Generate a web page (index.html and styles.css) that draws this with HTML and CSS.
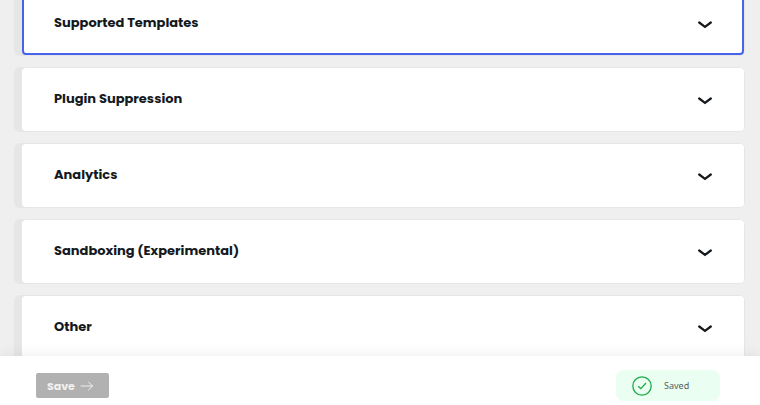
FILE: index.html
```
<!DOCTYPE html>
<html lang="en">

<head>
  <meta charset="UTF-8">
  <meta name="viewport" content="width=device-width, initial-scale=1.0">
  <title>Settings</title>
  <link rel="stylesheet" href="styles.css">
</head>

<body>
  <!-- Chevron shared by every drawer -->
  <svg class="sprite" width="0" height="0" aria-hidden="true">
    <symbol id="chevron" viewBox="0 0 14 8">
      <path d="M1.2 1.5 L7 5.9 L12.8 1.5" fill="none" stroke="currentColor" stroke-width="2.2" stroke-linecap="round" />
    </symbol>
  </svg>

  <main class="drawers">
    <section class="drawer drawer--focused">
      <h2><button type="button" class="drawer-toggle" aria-expanded="false">
        <span>Supported Templates</span>
        <svg class="chevron" aria-hidden="true"><use href="#chevron" /></svg>
      </button></h2>
    </section>
    <section class="drawer">
      <h2><button type="button" class="drawer-toggle" aria-expanded="false">
        <span>Plugin Suppression</span>
        <svg class="chevron" aria-hidden="true"><use href="#chevron" /></svg>
      </button></h2>
    </section>
    <section class="drawer">
      <h2><button type="button" class="drawer-toggle" aria-expanded="false">
        <span>Analytics</span>
        <svg class="chevron" aria-hidden="true"><use href="#chevron" /></svg>
      </button></h2>
    </section>
    <section class="drawer">
      <h2><button type="button" class="drawer-toggle" aria-expanded="false">
        <span>Sandboxing (Experimental)</span>
        <svg class="chevron" aria-hidden="true"><use href="#chevron" /></svg>
      </button></h2>
    </section>
    <section class="drawer">
      <h2><button type="button" class="drawer-toggle" aria-expanded="false">
        <span>Other</span>
        <svg class="chevron" aria-hidden="true"><use href="#chevron" /></svg>
      </button></h2>
    </section>
  </main>

  <footer class="save-bar">
    <button type="submit" class="save-button" disabled>
      Save
      <svg width="14" height="10" viewBox="0 0 14 10" fill="none" stroke="currentColor" aria-hidden="true">
        <path d="M1 5 H12.5 M8.5 1 L12.5 5 L8.5 9" stroke-linecap="round" stroke-linejoin="round" />
      </svg>
    </button>
    <p class="notice" role="status">
      <svg width="20" height="20" viewBox="0 0 20 20" fill="none" stroke="currentColor" aria-hidden="true">
        <circle cx="10" cy="10" r="9.2" stroke-width="1.3" />
        <path d="M6.2 10.2 L8.8 12.6 L14 7" stroke-width="1.3" />
      </svg>
      Saved
    </p>
  </footer>
</body>

</html>
```
FILE: styles.css
```
* {
  margin: 0;
  padding: 0;
  box-sizing: border-box;
}

body {
  background: #efefef;
  color: #14191e;
  font-family: Poppins, Inter, sans-serif;
}

.sprite {
  position: absolute;
}

/* Drawers */
.drawers {
  display: flex;
  flex-direction: column;
  gap: 11px;
  margin-top: -9px;
  padding: 0 15px 0 14px;
}

.drawer {
  padding: 1px 1px 1px 8px;
  background: #e6e6e6;
  border-radius: 6px;
}

.drawer-toggle {
  display: flex;
  align-items: center;
  justify-content: space-between;
  width: 100%;
  height: 63px;
  padding: 0 30px;
  background: #fff;
  border: 2px solid #fff;
  border-radius: 4px;
  color: inherit;
  font: 700 13px/20px Poppins, Inter, sans-serif;
  text-align: left;
  cursor: pointer;
}

.drawer-toggle span {
  padding-bottom: 2px;
}

.drawer--focused .drawer-toggle {
  border-color: #4564ea;
}

.chevron {
  width: 14px;
  height: 8px;
  margin-top: 3px;
}

/* Bar pinned under the drawers */
.save-bar {
  position: fixed;
  right: 0;
  bottom: 0;
  left: 0;
  display: flex;
  align-items: center;
  justify-content: space-between;
  padding: 14px 40px 4px 36px;
  background: #fff;
  box-shadow: 0 0 16px rgba(0, 0, 0, 0.08);
}

.save-button {
  display: flex;
  align-items: center;
  gap: 5px;
  height: 25px;
  padding: 0 15px 0 11px;
  background: #b1b1b1;
  border: 0;
  border-radius: 2px;
  color: #f0f0f0;
  font: 700 11px/16px Poppins, Inter, sans-serif;
}

.notice {
  display: flex;
  align-items: center;
  gap: 12px;
  width: 104px;
  height: 31px;
  padding-left: 16px;
  background: #eafff1;
  border-radius: 8px;
  color: #555c58;
  font: 9px/16px "Noto Sans", sans-serif;
}

.notice svg {
  color: #1eac4b;
}
```
